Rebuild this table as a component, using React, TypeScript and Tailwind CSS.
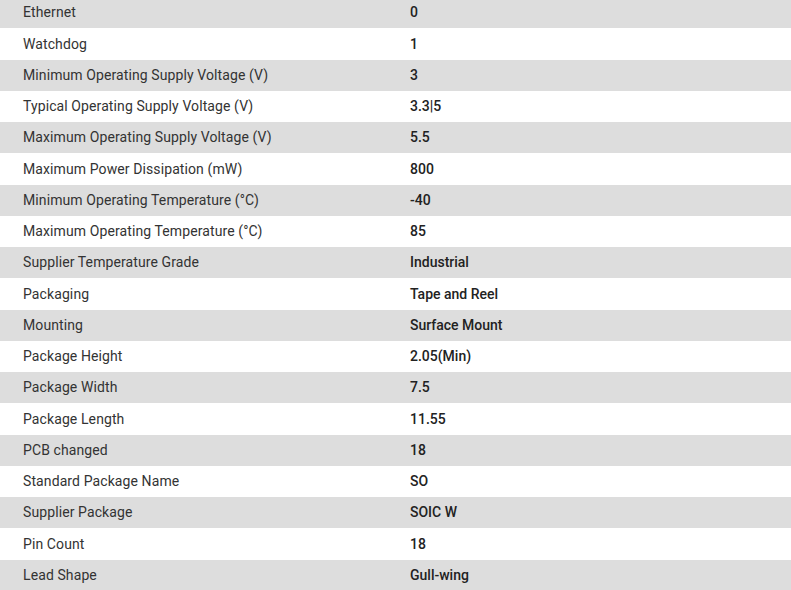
import React from "react";

const rows: [string, string][] = [
  ["Ethernet", "0"],
  ["Watchdog", "1"],
  ["Minimum Operating Supply Voltage (V)", "3"],
  ["Typical Operating Supply Voltage (V)", "3.3|5"],
  ["Maximum Operating Supply Voltage (V)", "5.5"],
  ["Maximum Power Dissipation (mW)", "800"],
  ["Minimum Operating Temperature (°C)", "-40"],
  ["Maximum Operating Temperature (°C)", "85"],
  ["Supplier Temperature Grade", "Industrial"],
  ["Packaging", "Tape and Reel"],
  ["Mounting", "Surface Mount"],
  ["Package Height", "2.05(Min)"],
  ["Package Width", "7.5"],
  ["Package Length", "11.55"],
  ["PCB changed", "18"],
  ["Standard Package Name", "SO"],
  ["Supplier Package", "SOIC W"],
  ["Pin Count", "18"],
  ["Lead Shape", "Gull-wing"],
];

export default function App() {
  return (
    <div className="w-[791px] h-[590px] overflow-hidden bg-white" style={{ fontFamily: 'Roboto, "Noto Sans", sans-serif' }}>
      <div className="-mt-[2.8px] flex flex-col">
        {rows.map(([k, v], i) => (
          <div
            key={i}
            className={`grid grid-cols-[387px_1fr] h-[31.25px] items-center text-[14px] ${i % 2 === 0 ? "bg-[#dddddd]" : "bg-white"}`}
          >
            <div className="pl-[23px] text-[#333333] tracking-[0.1px]">{k}</div>
            <div className="pl-[23px] text-[#222222] font-medium">{v}</div>
          </div>
        ))}
      </div>
    </div>
  );
}
